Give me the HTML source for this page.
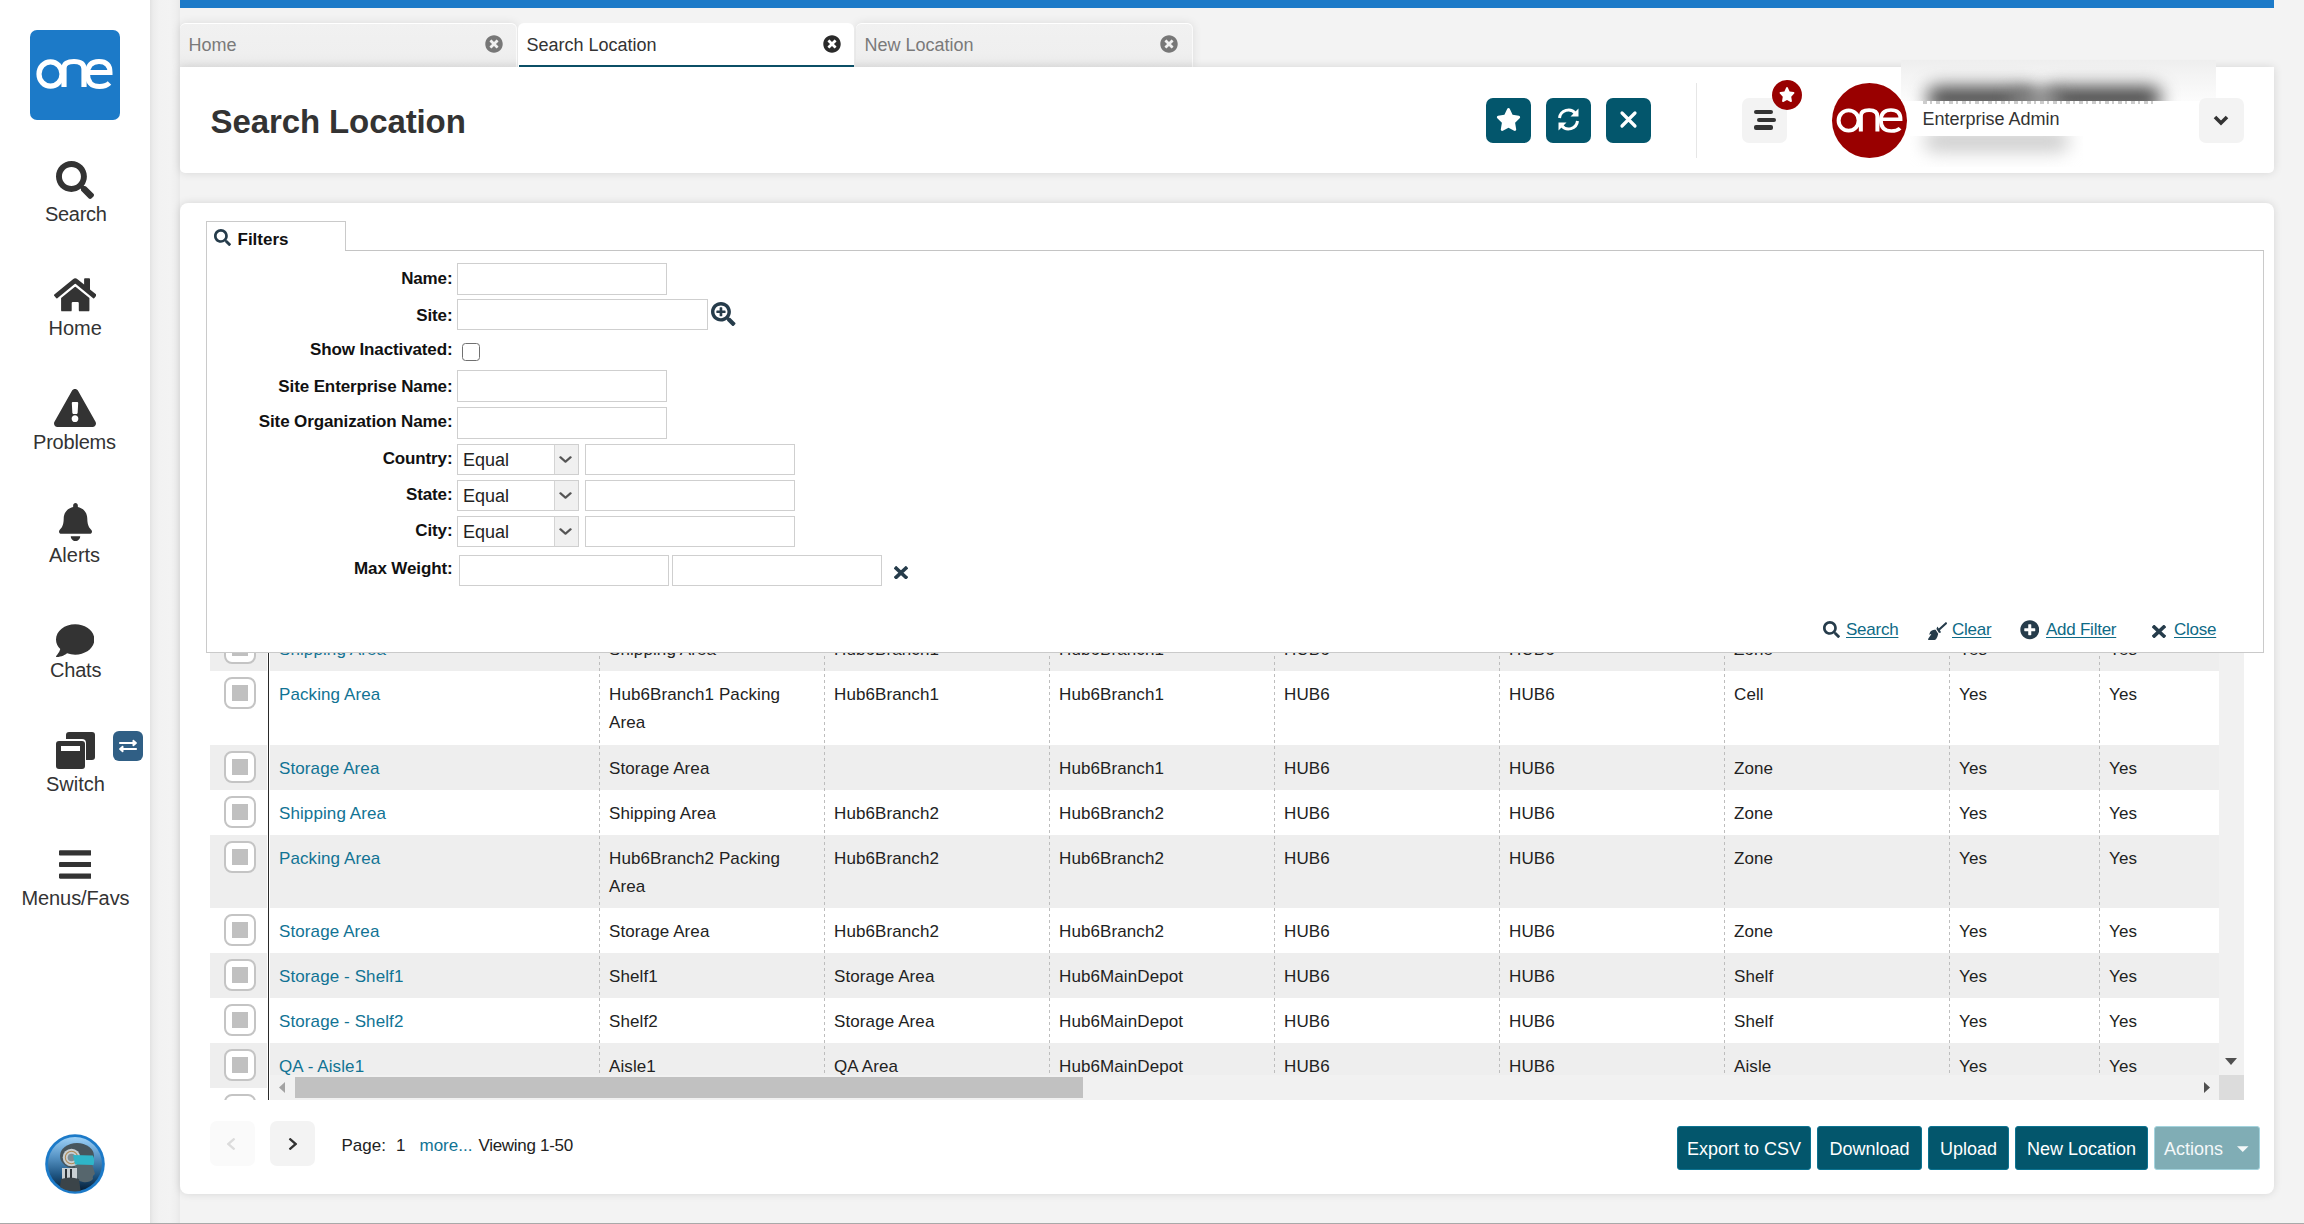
<!DOCTYPE html><html><head><meta charset="utf-8"><style>
*{box-sizing:border-box}
html,body{margin:0;padding:0}
body{width:2304px;height:1224px;overflow:hidden;background:#f3f3f3;position:relative;font-family:"Liberation Sans",sans-serif}
.b{position:absolute}
.t{position:absolute;white-space:nowrap;font-family:"Liberation Sans",sans-serif}
</style></head><body>
<div class="b" style="left:0px;top:0px;width:150px;height:1224px;background:#fff;"></div>
<div class="b" style="left:150px;top:0px;width:30px;height:1224px;background:linear-gradient(90deg,#e2e2e2 0px,#ececec 3px,#f2f2f2 9px,#f3f3f3 20px,#efefef 26px,#e9e9e9 30px);"></div>
<div class="b" style="left:30px;top:30px;width:90px;height:90px;background:#1c7ac8;border-radius:7px;"></div>
<svg class="b" style="left:36px;top:56px;width:78px;height:36px" viewBox="0 0 78 36"><ellipse cx="14.5" cy="18" rx="11.5" ry="12.2" fill="none" stroke="#fff" stroke-width="5.2"/><path d="M28 31 V12 Q28 5.5 38 5.5 Q48 5.5 48 13 V31" fill="none" stroke="#fff" stroke-width="5.2"/><path d="M51 16.5 H74 Q74 5.5 63 5.5 Q51.5 5.5 51.5 18 Q51.5 30.5 63.5 30.5 Q70 30.5 73.5 27" fill="none" stroke="#fff" stroke-width="5"/></svg>
<svg style="position:absolute;left:56px;top:161px;width:38px;height:38px;" viewBox="0 0 512 512" preserveAspectRatio="none"><path fill="#333" d="M505 442.7L405.3 343c-4.5-4.5-10.6-7-17-7H372c27.6-35.3 44-79.7 44-128C416 93.1 322.9 0 208 0S0 93.1 0 208s93.1 208 208 208c48.3 0 92.7-16.4 128-44v16.3c0 6.4 2.5 12.5 7 17l99.7 99.7c9.4 9.4 24.6 9.4 33.9 0l28.3-28.3c9.4-9.4 9.4-24.6.1-34zM208 336c-70.7 0-128-57.2-128-128 0-70.7 57.2-128 128-128 70.7 0 128 57.2 128 128 0 70.7-57.2 128-128 128z"/></svg>
<div class="t " style="left:45px;top:204.07px;font-size:20px;line-height:20px;color:#333;font-weight:400;width:61px;letter-spacing:-0.3px">Search</div>
<svg style="position:absolute;left:53.5px;top:275.6px;width:42.5px;height:37.7px;" viewBox="0 0 576 512" preserveAspectRatio="none"><path fill="#333" d="M280.37 148.26L96 300.11V464a16 16 0 0 0 16 16l112.06-.29a16 16 0 0 0 15.92-16V368a16 16 0 0 1 16-16h64a16 16 0 0 1 16 16v95.64a16 16 0 0 0 16 16.05L464 480a16 16 0 0 0 16-16V300L295.67 148.26a12.19 12.19 0 0 0-15.3 0zM571.6 251.47L488 182.56V44.05a12 12 0 0 0-12-12h-56a12 12 0 0 0-12 12v72.61L318.47 43a48 48 0 0 0-61 0L4.34 251.47a12 12 0 0 0-1.6 16.9l25.5 31A12 12 0 0 0 45.15 301l235.220-193.74a12.19 12.19 0 0 1 15.3 0L530.9 301a12 12 0 0 0 16.9-1.6l25.5-31a12 12 0 0 0-1.7-16.93z"/></svg>
<div class="t " style="left:48.5px;top:317.57px;font-size:20px;line-height:20px;color:#333;font-weight:400;">Home</div>
<svg style="position:absolute;left:54px;top:389px;width:42px;height:38px;" viewBox="0 0 576 512" preserveAspectRatio="none"><path fill="#333" d="M569.517 440.013C587.975 472.007 564.806 512 527.94 512H48.054c-36.937 0-59.999-40.055-41.577-71.987L246.423 23.985c18.467-32.009 64.72-31.951 83.154 0l239.94 416.028zM288 354c-25.405 0-46 20.595-46 46s20.595 46 46 46 46-20.595 46-46-20.595-46-46-46zm-43.673-165.346l7.418 136c.347 6.364 5.609 11.346 11.982 11.346h48.546c6.373 0 11.635-4.982 11.982-11.346l7.418-136c.375-6.874-5.098-12.654-11.982-12.654h-63.383c-6.884 0-12.356 5.78-11.981 12.654z"/></svg>
<div class="t " style="left:33px;top:431.57px;font-size:20px;line-height:20px;color:#333;font-weight:400;letter-spacing:-0.2px">Problems</div>
<svg style="position:absolute;left:58.5px;top:503px;width:33px;height:38px;" viewBox="0 0 448 512" preserveAspectRatio="none"><path fill="#333" d="M224 512c35.32 0 63.970-28.65 63.970-64H160.03c0 35.35 28.65 64 63.97 64zm215.39-149.71c-19.32-20.760-55.47-51.99-55.47-154.29 0-77.7-54.48-139.9-127.94-155.16V32c0-17.67-14.32-32-31.98-32s-31.98 14.33-31.98 32v20.84C118.56 68.1 64.08 130.3 64.08 208c0 102.3-36.15 133.53-55.47 154.29-6 6.45-8.66 14.16-8.61 21.71.11 16.4 12.98 32 32.1 32h383.8c19.12 0 32-15.6 32.1-32 .05-7.55-2.61-15.27-8.61-21.71z"/></svg>
<div class="t " style="left:49px;top:545.07px;font-size:20px;line-height:20px;color:#333;font-weight:400;">Alerts</div>
<svg style="position:absolute;left:56px;top:621.6px;width:38.4px;height:37.4px;" viewBox="0 0 512 512" preserveAspectRatio="none"><path fill="#333" d="M256 32C114.6 32 0 125.1 0 240c0 49.6 21.4 95 57 130.7C44.5 421.1 2.7 466 2.2 466.5c-2.2 2.3-2.8 5.7-1.5 8.7S4.8 480 8 480c66.3 0 116-31.8 140.6-51.4 32.7 12.3 69 19.4 107.4 19.4 141.4 0 256-93.1 256-208S397.4 32 256 32z"/></svg>
<div class="t " style="left:50px;top:659.57px;font-size:20px;line-height:20px;color:#333;font-weight:400;letter-spacing:-0.2px">Chats</div>
<div class="b" style="left:65.5px;top:731.5px;width:29px;height:28px;background:#333;border-radius:3px;"></div>
<div class="b" style="left:54px;top:739px;width:32px;height:31.5px;background:#fff;border-radius:4px;"></div>
<div class="b" style="left:56px;top:741px;width:28.5px;height:28px;background:#333;border-radius:3px;"></div>
<div class="b" style="left:60.5px;top:745.5px;width:19px;height:5px;background:#fff;"></div>
<div class="b" style="left:113px;top:731px;width:30px;height:30px;background:#305f85;border-radius:6px;"></div>
<svg style="position:absolute;left:119px;top:738px;width:18px;height:16px;" viewBox="0 0 512 512" preserveAspectRatio="none"><path fill="#fff" d="M0 168v-16c0-13.255 10.745-24 24-24h360V80c0-21.367 25.899-32.042 40.971-16.971l80 80c9.372 9.373 9.372 24.569 0 33.941l-80 80C409.956 271.982 384 261.456 384 240v-48H24c-13.255 0-24-10.745-24-24zm488 152H128v-48c0-21.314-25.862-32.08-40.971-16.971l-80 80c-9.372 9.373-9.372 24.569 0 33.941l80 80C102.057 463.997 128 453.437 128 432v-48h360c13.255 0 24-10.745 24-24v-16c0-13.255-10.745-24-24-24z"/></svg>
<div class="t " style="left:46px;top:774.07px;font-size:20px;line-height:20px;color:#333;font-weight:400;">Switch</div>
<svg style="position:absolute;left:58.5px;top:846px;width:32.5px;height:37px;" viewBox="0 0 448 512" preserveAspectRatio="none"><path fill="#333" d="M16 132h416c8.837 0 16-7.163 16-16V76c0-8.837-7.163-16-16-16H16C7.163 60 0 67.163 0 76v40c0 8.837 7.163 16 16 16zm0 160h416c8.837 0 16-7.163 16-16v-40c0-8.837-7.163-16-16-16H16c-8.837 0-16 7.163-16 16v40c0 8.837 7.163 16 16 16zm0 160h416c8.837 0 16-7.163 16-16v-40c0-8.837-7.163-16-16-16H16c-8.837 0-16 7.163-16 16v40c0 8.837 7.163 16 16 16z"/></svg>
<div class="t " style="left:21.5px;top:888.07px;font-size:20px;line-height:20px;color:#333;font-weight:400;letter-spacing:-0.1px">Menus/Favs</div>
<svg class="b" style="left:45px;top:1134px;width:60px;height:60px" viewBox="0 0 60 60"><defs><linearGradient id="avg" x1="0" y1="0" x2="0" y2="1"><stop offset="0" stop-color="#9fd2f7"/><stop offset="0.35" stop-color="#5a97c8"/><stop offset="0.7" stop-color="#1f5683"/><stop offset="1" stop-color="#071d33"/></linearGradient><clipPath id="avc"><circle cx="30" cy="30" r="27.5"/></clipPath></defs><circle cx="30" cy="30" r="29.8" fill="#1c7ac8"/><circle cx="30" cy="30" r="27" fill="url(#avg)"/><g clip-path="url(#avc)"><ellipse cx="32" cy="22" rx="17" ry="13" fill="#47555c"/><path d="M30 30 Q33 28 47 30 Q49 36 50 40 Q47 42 48 45 Q44 49 38 48 Q32 47 30 40 Z" fill="#56666d"/><rect x="17" y="34" width="15" height="12" fill="#c9d0d4"/><rect x="20" y="35" width="2" height="11" fill="#2c3338"/><rect x="25" y="35" width="2" height="11" fill="#2c3338"/><path d="M14 60 L16 45 Q25 42 34 45 L36 60 Z" fill="#3b4449"/><circle cx="26.5" cy="23.5" r="8.8" fill="#c6ced2"/><circle cx="26.5" cy="23.5" r="6.2" fill="none" stroke="#b08a55" stroke-width="1.1"/><circle cx="26.5" cy="23.5" r="3.8" fill="#7d8d93"/><path d="M28 21 L48 21.5 Q50 26 48.5 31 L30 30.5 Z" fill="#2fb5c8"/></g></svg>
<div class="b" style="left:0px;top:1223px;width:2304px;height:1px;background:#a9a9a9;"></div>
<div class="b" style="left:180px;top:0px;width:2094px;height:8px;background:#1c7ac8;"></div>
<div class="b" style="left:180px;top:23px;width:337px;height:44px;background:linear-gradient(180deg,#f1f1f1 0%,#efefef 70%,#e9e9e9 100%);border-radius:6px 6px 0 0;border-top:1px solid #fff;border-right:1px solid #fafafa;box-shadow:0 0 10px rgba(0,0,0,0.10);"></div><div class="t " style="left:188.5px;top:35.56px;font-size:18px;line-height:18px;color:#7a7a7a;font-weight:400;">Home</div><svg style="position:absolute;left:485px;top:35px;width:18px;height:18px;" viewBox="0 0 512 512" preserveAspectRatio="none"><path fill="#777" d="M256 8C119 8 8 119 8 256s111 248 248 248 248-111 248-248S393 8 256 8zm121.6 313.1c4.7 4.7 4.7 12.3 0 17L338 377.6c-4.7 4.7-12.3 4.7-17 0L256 312l-65.1 65.6c-4.7 4.7-12.3 4.7-17 0L134.4 338c-4.7-4.7-4.7-12.3 0-17l65.6-65-65.6-65.1c-4.7-4.7-4.7-12.3 0-17l39.6-39.6c4.7-4.7 12.3-4.7 17 0l65 65.7 65.1-65.6c4.7-4.7 12.3-4.7 17 0l39.6 39.6c4.7 4.7 4.7 12.3 0 17L312 256l65.6 65.1z"/></svg>
<div class="b" style="left:856px;top:23px;width:337px;height:44px;background:linear-gradient(180deg,#f1f1f1 0%,#efefef 70%,#e9e9e9 100%);border-radius:6px 6px 0 0;border-top:1px solid #fff;border-right:1px solid #fafafa;box-shadow:0 0 10px rgba(0,0,0,0.10);"></div><div class="t " style="left:864.5px;top:35.56px;font-size:18px;line-height:18px;color:#7a7a7a;font-weight:400;">New Location</div><svg style="position:absolute;left:1159.5px;top:35px;width:18px;height:18px;" viewBox="0 0 512 512" preserveAspectRatio="none"><path fill="#777" d="M256 8C119 8 8 119 8 256s111 248 248 248 248-111 248-248S393 8 256 8zm121.6 313.1c4.7 4.7 4.7 12.3 0 17L338 377.6c-4.7 4.7-12.3 4.7-17 0L256 312l-65.1 65.6c-4.7 4.7-12.3 4.7-17 0L134.4 338c-4.7-4.7-4.7-12.3 0-17l65.6-65-65.6-65.1c-4.7-4.7-4.7-12.3 0-17l39.6-39.6c4.7-4.7 12.3-4.7 17 0l65 65.7 65.1-65.6c4.7-4.7 12.3-4.7 17 0l39.6 39.6c4.7 4.7 4.7 12.3 0 17L312 256l65.6 65.1z"/></svg>
<div class="b" style="left:180px;top:67px;width:2094px;height:106px;background:#fff;border-radius:0 0 5px 5px;box-shadow:0 0 10px rgba(0,0,0,0.12);"></div>
<div class="b" style="left:518px;top:23px;width:336px;height:44px;background:#fff;border-radius:6px 6px 0 0;"></div><div class="b" style="left:519px;top:65px;width:335px;height:2px;background:#0b4f66;"></div><div class="t " style="left:526.5px;top:35.56px;font-size:18px;line-height:18px;color:#333;font-weight:400;">Search Location</div><svg style="position:absolute;left:823px;top:35px;width:18px;height:18px;" viewBox="0 0 512 512" preserveAspectRatio="none"><path fill="#2a2a2a" d="M256 8C119 8 8 119 8 256s111 248 248 248 248-111 248-248S393 8 256 8zm121.6 313.1c4.7 4.7 4.7 12.3 0 17L338 377.6c-4.7 4.7-12.3 4.7-17 0L256 312l-65.1 65.6c-4.7 4.7-12.3 4.7-17 0L134.4 338c-4.7-4.7-4.7-12.3 0-17l65.6-65-65.6-65.1c-4.7-4.7-4.7-12.3 0-17l39.6-39.6c4.7-4.7 12.3-4.7 17 0l65 65.7 65.1-65.6c4.7-4.7 12.3-4.7 17 0l39.6 39.6c4.7 4.7 4.7 12.3 0 17L312 256l65.6 65.1z"/></svg>
<div class="t " style="left:210.5px;top:105.07px;font-size:33px;line-height:33px;color:#333;font-weight:700;letter-spacing:-0.1px">Search Location</div>
<div class="b" style="left:1486px;top:98px;width:45px;height:45px;background:#03566c;border-radius:7px;"></div>
<div class="b" style="left:1546px;top:98px;width:45px;height:45px;background:#03566c;border-radius:7px;"></div>
<div class="b" style="left:1606px;top:98px;width:45px;height:45px;background:#03566c;border-radius:7px;"></div>
<svg style="position:absolute;left:1496px;top:108px;width:25px;height:23px;" viewBox="0 0 576 512" preserveAspectRatio="none"><path fill="#fff" d="M259.3 17.8L194 150.2 47.9 171.5c-26.2 3.8-36.7 36.1-17.7 54.6l105.7 103-25 145.5c-4.5 26.3 23.2 46 46.4 33.7L288 439.6l130.7 68.7c23.2 12.2 50.9-7.4 46.4-33.7l-25-145.5 105.7-103c19-18.5 8.5-50.8-17.7-54.6L382 150.2 316.7 17.8c-11.7-23.600-45.6-23.9-57.4 0z"/></svg>
<svg class="b" style="left:1556px;top:107px;width:25px;height:25px" viewBox="0 0 25 25"><path d="M3.5 11 A9 9 0 0 1 19.5 6.5" fill="none" stroke="#fff" stroke-width="3"/><path d="M14.5 9.5 H22.5 V1.5 Z" fill="#fff"/><path d="M21.5 14 A9 9 0 0 1 5.5 18.5" fill="none" stroke="#fff" stroke-width="3"/><path d="M10.5 15.5 H2.5 V23.5 Z" fill="#fff"/></svg>
<svg class="b" style="left:1619px;top:110px;width:19px;height:19px" viewBox="0 0 19 19"><path d="M3 3 L16 16 M16 3 L3 16" stroke="#fff" stroke-width="3.2" stroke-linecap="round"/></svg>
<div class="b" style="left:1696px;top:83px;width:1px;height:75px;background:#e6e6e6;"></div>
<div class="b" style="left:1742px;top:98px;width:45px;height:45px;background:#f3f3f3;border-radius:7px;"></div>
<div class="b" style="left:1754px;top:109.5px;width:19px;height:4px;background:#333;border-radius:2px;"></div>
<div class="b" style="left:1757px;top:117.5px;width:19px;height:4.3px;background:#333;border-radius:2px;"></div>
<div class="b" style="left:1754px;top:125.3px;width:19px;height:4.3px;background:#333;border-radius:2px;"></div>
<div class="b" style="left:1772px;top:80px;width:30px;height:30px;background:#990000;border-radius:50%;"></div>
<svg style="position:absolute;left:1779px;top:87px;width:16px;height:15px;" viewBox="0 0 576 512" preserveAspectRatio="none"><path fill="#fff" d="M259.3 17.8L194 150.2 47.9 171.5c-26.2 3.8-36.7 36.1-17.7 54.6l105.7 103-25 145.5c-4.5 26.3 23.2 46 46.4 33.7L288 439.6l130.7 68.7c23.2 12.2 50.9-7.4 46.4-33.7l-25-145.5 105.7-103c19-18.5 8.5-50.8-17.7-54.6L382 150.2 316.7 17.8c-11.7-23.600-45.6-23.9-57.4 0z"/></svg>
<div class="b" style="left:1832px;top:83px;width:75px;height:75px;background:#990000;border-radius:50%;"></div>
<svg class="b" style="left:1835.5px;top:106px;width:68px;height:29px" viewBox="0 0 78 36" preserveAspectRatio="none"><ellipse cx="14.5" cy="18" rx="11.5" ry="12.6" fill="none" stroke="#fff" stroke-width="4.6"/><path d="M28.5 31.5 V12 Q28.5 5 38 5 Q47.5 5 47.5 13 V31.5" fill="none" stroke="#fff" stroke-width="4.6"/><path d="M51 16.5 H74 Q74 5 63 5 Q51.5 5 51.5 18 Q51.5 31 63.5 31 Q70 31 73.5 27.5" fill="none" stroke="#fff" stroke-width="4.4"/></svg>
<div class="b" style="left:1901px;top:60px;width:315px;height:41px;overflow:hidden;background:linear-gradient(180deg,#eeeeee 0%,#f2f2f2 25%,#f6f6f6 55%,#fcfcfc 100%)"><div class="b" style="left:26px;top:27px;width:112px;height:22px;border-radius:10px;background:#3e3e3e;filter:blur(9px)"></div><div class="b" style="left:142px;top:27px;width:118px;height:22px;border-radius:10px;background:#3a3a3a;filter:blur(9px)"></div><div class="b" style="left:110px;top:32px;width:50px;height:14px;background:#8a8a8a;filter:blur(8px)"></div></div>
<div class="b" style="left:1923px;top:101px;width:230px;height:2.5px;background:repeating-linear-gradient(90deg,#333 0 4px,#fff 4px 7px,#333 7px 9px,#fff 9px 13px);opacity:.25"></div>
<div class="t " style="left:1922.5px;top:109.76px;font-size:18px;line-height:18px;color:#333;font-weight:400;">Enterprise Admin</div>
<div class="b" style="left:1910px;top:136px;width:173px;height:31px;overflow:hidden;background:#fff"><div class="b" style="left:14px;top:-6px;width:145px;height:22px;border-radius:10px;background:#cdcdcd;filter:blur(9px)"></div></div>
<div class="b" style="left:2199px;top:98px;width:45px;height:45px;background:#f3f3f3;border-radius:7px;"></div>
<svg class="b" style="left:2212px;top:112px;width:18px;height:16px" viewBox="0 0 18 16"><path d="M3 5 L9 11 L15 5" fill="none" stroke="#333" stroke-width="3.6" stroke-linecap="butt" stroke-linejoin="miter"/></svg>
<div class="b" style="left:180px;top:203px;width:2094px;height:991px;background:#fff;border-radius:8px;box-shadow:0 0 9px rgba(0,0,0,0.12);"></div>
<div class="b" style="left:210px;top:560px;width:2034px;height:540px;overflow:hidden">
<div class="b" style="left:0;top:66px;width:57px;height:45px;background:#eeeeee"></div><div class="b" style="left:60px;top:66px;width:1949px;height:45px;background:#eeeeee"></div><div class="b" style="left:14px;top:72px;width:32px;height:32px;border:2px solid #c4c4c4;border-radius:8px;background:#fff"></div><div class="b" style="left:22px;top:80px;width:16px;height:16px;background:#c0c0c0"></div><div class="b" style="left:0;top:111px;width:57px;height:74px;background:#ffffff"></div><div class="b" style="left:60px;top:111px;width:1949px;height:74px;background:#ffffff"></div><div class="b" style="left:14px;top:117px;width:32px;height:32px;border:2px solid #c4c4c4;border-radius:8px;background:#fff"></div><div class="b" style="left:22px;top:125px;width:16px;height:16px;background:#c0c0c0"></div><div class="b" style="left:0;top:185px;width:57px;height:45px;background:#eeeeee"></div><div class="b" style="left:60px;top:185px;width:1949px;height:45px;background:#eeeeee"></div><div class="b" style="left:14px;top:191px;width:32px;height:32px;border:2px solid #c4c4c4;border-radius:8px;background:#fff"></div><div class="b" style="left:22px;top:199px;width:16px;height:16px;background:#c0c0c0"></div><div class="b" style="left:0;top:230px;width:57px;height:45px;background:#ffffff"></div><div class="b" style="left:60px;top:230px;width:1949px;height:45px;background:#ffffff"></div><div class="b" style="left:14px;top:236px;width:32px;height:32px;border:2px solid #c4c4c4;border-radius:8px;background:#fff"></div><div class="b" style="left:22px;top:244px;width:16px;height:16px;background:#c0c0c0"></div><div class="b" style="left:0;top:275px;width:57px;height:73px;background:#eeeeee"></div><div class="b" style="left:60px;top:275px;width:1949px;height:73px;background:#eeeeee"></div><div class="b" style="left:14px;top:281px;width:32px;height:32px;border:2px solid #c4c4c4;border-radius:8px;background:#fff"></div><div class="b" style="left:22px;top:289px;width:16px;height:16px;background:#c0c0c0"></div><div class="b" style="left:0;top:348px;width:57px;height:45px;background:#ffffff"></div><div class="b" style="left:60px;top:348px;width:1949px;height:45px;background:#ffffff"></div><div class="b" style="left:14px;top:354px;width:32px;height:32px;border:2px solid #c4c4c4;border-radius:8px;background:#fff"></div><div class="b" style="left:22px;top:362px;width:16px;height:16px;background:#c0c0c0"></div><div class="b" style="left:0;top:393px;width:57px;height:45px;background:#eeeeee"></div><div class="b" style="left:60px;top:393px;width:1949px;height:45px;background:#eeeeee"></div><div class="b" style="left:14px;top:399px;width:32px;height:32px;border:2px solid #c4c4c4;border-radius:8px;background:#fff"></div><div class="b" style="left:22px;top:407px;width:16px;height:16px;background:#c0c0c0"></div><div class="b" style="left:0;top:438px;width:57px;height:45px;background:#ffffff"></div><div class="b" style="left:60px;top:438px;width:1949px;height:45px;background:#ffffff"></div><div class="b" style="left:14px;top:444px;width:32px;height:32px;border:2px solid #c4c4c4;border-radius:8px;background:#fff"></div><div class="b" style="left:22px;top:452px;width:16px;height:16px;background:#c0c0c0"></div><div class="b" style="left:0;top:483px;width:57px;height:45px;background:#eeeeee"></div><div class="b" style="left:60px;top:483px;width:1949px;height:45px;background:#eeeeee"></div><div class="b" style="left:14px;top:489px;width:32px;height:32px;border:2px solid #c4c4c4;border-radius:8px;background:#fff"></div><div class="b" style="left:22px;top:497px;width:16px;height:16px;background:#c0c0c0"></div><div class="b" style="left:0;top:528px;width:57px;height:45px;background:#ffffff"></div><div class="b" style="left:60px;top:528px;width:1949px;height:45px;background:#ffffff"></div><div class="b" style="left:14px;top:534px;width:32px;height:32px;border:2px solid #c4c4c4;border-radius:8px;background:#fff"></div><div class="b" style="left:22px;top:542px;width:16px;height:16px;background:#c0c0c0"></div><div class="t " style="left:69px;top:80.61px;font-size:17px;line-height:17px;color:#117394;font-weight:400;letter-spacing:0.1px">Shipping Area</div><div class="t " style="left:399px;top:80.61px;font-size:17px;line-height:17px;color:#222;font-weight:400;letter-spacing:0.1px">Shipping Area</div><div class="t " style="left:624px;top:80.61px;font-size:17px;line-height:17px;color:#222;font-weight:400;letter-spacing:0.1px">Hub6Branch1</div><div class="t " style="left:849px;top:80.61px;font-size:17px;line-height:17px;color:#222;font-weight:400;letter-spacing:0.1px">Hub6Branch1</div><div class="t " style="left:1074px;top:80.61px;font-size:17px;line-height:17px;color:#222;font-weight:400;letter-spacing:0.1px">HUB6</div><div class="t " style="left:1299px;top:80.61px;font-size:17px;line-height:17px;color:#222;font-weight:400;letter-spacing:0.1px">HUB6</div><div class="t " style="left:1524px;top:80.61px;font-size:17px;line-height:17px;color:#222;font-weight:400;letter-spacing:0.1px">Zone</div><div class="t " style="left:1749px;top:80.61px;font-size:17px;line-height:17px;color:#222;font-weight:400;letter-spacing:0.1px">Yes</div><div class="t " style="left:1899px;top:80.61px;font-size:17px;line-height:17px;color:#222;font-weight:400;letter-spacing:0.1px">Yes</div><div class="t " style="left:69px;top:125.61px;font-size:17px;line-height:17px;color:#117394;font-weight:400;letter-spacing:0.1px">Packing Area</div><div class="t " style="left:399px;top:125.61px;font-size:17px;line-height:17px;color:#222;font-weight:400;letter-spacing:0.1px">Hub6Branch1 Packing</div><div class="t " style="left:399px;top:154.21px;font-size:17px;line-height:17px;color:#222;font-weight:400;letter-spacing:0.1px">Area</div><div class="t " style="left:624px;top:125.61px;font-size:17px;line-height:17px;color:#222;font-weight:400;letter-spacing:0.1px">Hub6Branch1</div><div class="t " style="left:849px;top:125.61px;font-size:17px;line-height:17px;color:#222;font-weight:400;letter-spacing:0.1px">Hub6Branch1</div><div class="t " style="left:1074px;top:125.61px;font-size:17px;line-height:17px;color:#222;font-weight:400;letter-spacing:0.1px">HUB6</div><div class="t " style="left:1299px;top:125.61px;font-size:17px;line-height:17px;color:#222;font-weight:400;letter-spacing:0.1px">HUB6</div><div class="t " style="left:1524px;top:125.61px;font-size:17px;line-height:17px;color:#222;font-weight:400;letter-spacing:0.1px">Cell</div><div class="t " style="left:1749px;top:125.61px;font-size:17px;line-height:17px;color:#222;font-weight:400;letter-spacing:0.1px">Yes</div><div class="t " style="left:1899px;top:125.61px;font-size:17px;line-height:17px;color:#222;font-weight:400;letter-spacing:0.1px">Yes</div><div class="t " style="left:69px;top:199.61px;font-size:17px;line-height:17px;color:#117394;font-weight:400;letter-spacing:0.1px">Storage Area</div><div class="t " style="left:399px;top:199.61px;font-size:17px;line-height:17px;color:#222;font-weight:400;letter-spacing:0.1px">Storage Area</div><div class="t " style="left:849px;top:199.61px;font-size:17px;line-height:17px;color:#222;font-weight:400;letter-spacing:0.1px">Hub6Branch1</div><div class="t " style="left:1074px;top:199.61px;font-size:17px;line-height:17px;color:#222;font-weight:400;letter-spacing:0.1px">HUB6</div><div class="t " style="left:1299px;top:199.61px;font-size:17px;line-height:17px;color:#222;font-weight:400;letter-spacing:0.1px">HUB6</div><div class="t " style="left:1524px;top:199.61px;font-size:17px;line-height:17px;color:#222;font-weight:400;letter-spacing:0.1px">Zone</div><div class="t " style="left:1749px;top:199.61px;font-size:17px;line-height:17px;color:#222;font-weight:400;letter-spacing:0.1px">Yes</div><div class="t " style="left:1899px;top:199.61px;font-size:17px;line-height:17px;color:#222;font-weight:400;letter-spacing:0.1px">Yes</div><div class="t " style="left:69px;top:244.61px;font-size:17px;line-height:17px;color:#117394;font-weight:400;letter-spacing:0.1px">Shipping Area</div><div class="t " style="left:399px;top:244.61px;font-size:17px;line-height:17px;color:#222;font-weight:400;letter-spacing:0.1px">Shipping Area</div><div class="t " style="left:624px;top:244.61px;font-size:17px;line-height:17px;color:#222;font-weight:400;letter-spacing:0.1px">Hub6Branch2</div><div class="t " style="left:849px;top:244.61px;font-size:17px;line-height:17px;color:#222;font-weight:400;letter-spacing:0.1px">Hub6Branch2</div><div class="t " style="left:1074px;top:244.61px;font-size:17px;line-height:17px;color:#222;font-weight:400;letter-spacing:0.1px">HUB6</div><div class="t " style="left:1299px;top:244.61px;font-size:17px;line-height:17px;color:#222;font-weight:400;letter-spacing:0.1px">HUB6</div><div class="t " style="left:1524px;top:244.61px;font-size:17px;line-height:17px;color:#222;font-weight:400;letter-spacing:0.1px">Zone</div><div class="t " style="left:1749px;top:244.61px;font-size:17px;line-height:17px;color:#222;font-weight:400;letter-spacing:0.1px">Yes</div><div class="t " style="left:1899px;top:244.61px;font-size:17px;line-height:17px;color:#222;font-weight:400;letter-spacing:0.1px">Yes</div><div class="t " style="left:69px;top:289.61px;font-size:17px;line-height:17px;color:#117394;font-weight:400;letter-spacing:0.1px">Packing Area</div><div class="t " style="left:399px;top:289.61px;font-size:17px;line-height:17px;color:#222;font-weight:400;letter-spacing:0.1px">Hub6Branch2 Packing</div><div class="t " style="left:399px;top:318.21px;font-size:17px;line-height:17px;color:#222;font-weight:400;letter-spacing:0.1px">Area</div><div class="t " style="left:624px;top:289.61px;font-size:17px;line-height:17px;color:#222;font-weight:400;letter-spacing:0.1px">Hub6Branch2</div><div class="t " style="left:849px;top:289.61px;font-size:17px;line-height:17px;color:#222;font-weight:400;letter-spacing:0.1px">Hub6Branch2</div><div class="t " style="left:1074px;top:289.61px;font-size:17px;line-height:17px;color:#222;font-weight:400;letter-spacing:0.1px">HUB6</div><div class="t " style="left:1299px;top:289.61px;font-size:17px;line-height:17px;color:#222;font-weight:400;letter-spacing:0.1px">HUB6</div><div class="t " style="left:1524px;top:289.61px;font-size:17px;line-height:17px;color:#222;font-weight:400;letter-spacing:0.1px">Zone</div><div class="t " style="left:1749px;top:289.61px;font-size:17px;line-height:17px;color:#222;font-weight:400;letter-spacing:0.1px">Yes</div><div class="t " style="left:1899px;top:289.61px;font-size:17px;line-height:17px;color:#222;font-weight:400;letter-spacing:0.1px">Yes</div><div class="t " style="left:69px;top:362.61px;font-size:17px;line-height:17px;color:#117394;font-weight:400;letter-spacing:0.1px">Storage Area</div><div class="t " style="left:399px;top:362.61px;font-size:17px;line-height:17px;color:#222;font-weight:400;letter-spacing:0.1px">Storage Area</div><div class="t " style="left:624px;top:362.61px;font-size:17px;line-height:17px;color:#222;font-weight:400;letter-spacing:0.1px">Hub6Branch2</div><div class="t " style="left:849px;top:362.61px;font-size:17px;line-height:17px;color:#222;font-weight:400;letter-spacing:0.1px">Hub6Branch2</div><div class="t " style="left:1074px;top:362.61px;font-size:17px;line-height:17px;color:#222;font-weight:400;letter-spacing:0.1px">HUB6</div><div class="t " style="left:1299px;top:362.61px;font-size:17px;line-height:17px;color:#222;font-weight:400;letter-spacing:0.1px">HUB6</div><div class="t " style="left:1524px;top:362.61px;font-size:17px;line-height:17px;color:#222;font-weight:400;letter-spacing:0.1px">Zone</div><div class="t " style="left:1749px;top:362.61px;font-size:17px;line-height:17px;color:#222;font-weight:400;letter-spacing:0.1px">Yes</div><div class="t " style="left:1899px;top:362.61px;font-size:17px;line-height:17px;color:#222;font-weight:400;letter-spacing:0.1px">Yes</div><div class="t " style="left:69px;top:407.61px;font-size:17px;line-height:17px;color:#117394;font-weight:400;letter-spacing:0.1px">Storage - Shelf1</div><div class="t " style="left:399px;top:407.61px;font-size:17px;line-height:17px;color:#222;font-weight:400;letter-spacing:0.1px">Shelf1</div><div class="t " style="left:624px;top:407.61px;font-size:17px;line-height:17px;color:#222;font-weight:400;letter-spacing:0.1px">Storage Area</div><div class="t " style="left:849px;top:407.61px;font-size:17px;line-height:17px;color:#222;font-weight:400;letter-spacing:0.1px">Hub6MainDepot</div><div class="t " style="left:1074px;top:407.61px;font-size:17px;line-height:17px;color:#222;font-weight:400;letter-spacing:0.1px">HUB6</div><div class="t " style="left:1299px;top:407.61px;font-size:17px;line-height:17px;color:#222;font-weight:400;letter-spacing:0.1px">HUB6</div><div class="t " style="left:1524px;top:407.61px;font-size:17px;line-height:17px;color:#222;font-weight:400;letter-spacing:0.1px">Shelf</div><div class="t " style="left:1749px;top:407.61px;font-size:17px;line-height:17px;color:#222;font-weight:400;letter-spacing:0.1px">Yes</div><div class="t " style="left:1899px;top:407.61px;font-size:17px;line-height:17px;color:#222;font-weight:400;letter-spacing:0.1px">Yes</div><div class="t " style="left:69px;top:452.61px;font-size:17px;line-height:17px;color:#117394;font-weight:400;letter-spacing:0.1px">Storage - Shelf2</div><div class="t " style="left:399px;top:452.61px;font-size:17px;line-height:17px;color:#222;font-weight:400;letter-spacing:0.1px">Shelf2</div><div class="t " style="left:624px;top:452.61px;font-size:17px;line-height:17px;color:#222;font-weight:400;letter-spacing:0.1px">Storage Area</div><div class="t " style="left:849px;top:452.61px;font-size:17px;line-height:17px;color:#222;font-weight:400;letter-spacing:0.1px">Hub6MainDepot</div><div class="t " style="left:1074px;top:452.61px;font-size:17px;line-height:17px;color:#222;font-weight:400;letter-spacing:0.1px">HUB6</div><div class="t " style="left:1299px;top:452.61px;font-size:17px;line-height:17px;color:#222;font-weight:400;letter-spacing:0.1px">HUB6</div><div class="t " style="left:1524px;top:452.61px;font-size:17px;line-height:17px;color:#222;font-weight:400;letter-spacing:0.1px">Shelf</div><div class="t " style="left:1749px;top:452.61px;font-size:17px;line-height:17px;color:#222;font-weight:400;letter-spacing:0.1px">Yes</div><div class="t " style="left:1899px;top:452.61px;font-size:17px;line-height:17px;color:#222;font-weight:400;letter-spacing:0.1px">Yes</div><div class="t " style="left:69px;top:497.61px;font-size:17px;line-height:17px;color:#117394;font-weight:400;letter-spacing:0.1px">QA - Aisle1</div><div class="t " style="left:399px;top:497.61px;font-size:17px;line-height:17px;color:#222;font-weight:400;letter-spacing:0.1px">Aisle1</div><div class="t " style="left:624px;top:497.61px;font-size:17px;line-height:17px;color:#222;font-weight:400;letter-spacing:0.1px">QA Area</div><div class="t " style="left:849px;top:497.61px;font-size:17px;line-height:17px;color:#222;font-weight:400;letter-spacing:0.1px">Hub6MainDepot</div><div class="t " style="left:1074px;top:497.61px;font-size:17px;line-height:17px;color:#222;font-weight:400;letter-spacing:0.1px">HUB6</div><div class="t " style="left:1299px;top:497.61px;font-size:17px;line-height:17px;color:#222;font-weight:400;letter-spacing:0.1px">HUB6</div><div class="t " style="left:1524px;top:497.61px;font-size:17px;line-height:17px;color:#222;font-weight:400;letter-spacing:0.1px">Aisle</div><div class="t " style="left:1749px;top:497.61px;font-size:17px;line-height:17px;color:#222;font-weight:400;letter-spacing:0.1px">Yes</div><div class="t " style="left:1899px;top:497.61px;font-size:17px;line-height:17px;color:#222;font-weight:400;letter-spacing:0.1px">Yes</div><div class="b" style="left:389.0px;top:0;width:1px;height:540px;background:repeating-linear-gradient(180deg,#bdbdbd 0 3px,transparent 3px 6px)"></div><div class="b" style="left:614.0px;top:0;width:1px;height:540px;background:repeating-linear-gradient(180deg,#bdbdbd 0 3px,transparent 3px 6px)"></div><div class="b" style="left:839.0px;top:0;width:1px;height:540px;background:repeating-linear-gradient(180deg,#bdbdbd 0 3px,transparent 3px 6px)"></div><div class="b" style="left:1064.0px;top:0;width:1px;height:540px;background:repeating-linear-gradient(180deg,#bdbdbd 0 3px,transparent 3px 6px)"></div><div class="b" style="left:1289.0px;top:0;width:1px;height:540px;background:repeating-linear-gradient(180deg,#bdbdbd 0 3px,transparent 3px 6px)"></div><div class="b" style="left:1514.0px;top:0;width:1px;height:540px;background:repeating-linear-gradient(180deg,#bdbdbd 0 3px,transparent 3px 6px)"></div><div class="b" style="left:1739.0px;top:0;width:1px;height:540px;background:repeating-linear-gradient(180deg,#bdbdbd 0 3px,transparent 3px 6px)"></div><div class="b" style="left:1889.0px;top:0;width:1px;height:540px;background:repeating-linear-gradient(180deg,#bdbdbd 0 3px,transparent 3px 6px)"></div><div class="b" style="left:58px;top:0;width:1px;height:540px;background:#2a2a2a"></div><div class="b" style="left:2009px;top:0;width:25px;height:515px;background:#f1f1f1"></div><svg class="b" style="left:2015px;top:498px;width:12px;height:7px" viewBox="0 0 12 7"><path d="M0 0H12L6 7Z" fill="#505050"/></svg><div class="b" style="left:60px;top:515px;width:1949px;height:25px;background:#f1f1f1"></div><div class="b" style="left:85px;top:516.5px;width:788px;height:21.5px;background:#c1c1c1"></div><svg class="b" style="left:69px;top:521.5px;width:6px;height:11px" viewBox="0 0 6 11"><path d="M6 0V11L0 5.5Z" fill="#a3a3a3"/></svg><svg class="b" style="left:1994px;top:521.5px;width:6px;height:11px" viewBox="0 0 6 11"><path d="M0 0V11L6 5.5Z" fill="#505050"/></svg><div class="b" style="left:2009px;top:515px;width:25px;height:25px;background:#dcdcdc"></div>
</div>
<div class="b" style="left:206px;top:221px;width:140px;height:31px;background:#fff;border:1.5px solid #cacaca;border-bottom:none;"></div>
<div class="b" style="left:206px;top:250px;width:2058px;height:402.5px;background:#fff;border:1.5px solid #cacaca;border-top:none;"></div>
<div class="b" style="left:345px;top:250px;width:1919px;height:1px;background:#c4c4c4;"></div>
<div class="b" style="left:207.5px;top:250px;width:137.5px;height:2px;background:#fff;"></div>
<svg style="position:absolute;left:213.5px;top:228.5px;width:17px;height:17px;" viewBox="0 0 512 512" preserveAspectRatio="none"><path fill="#263c4b" d="M505 442.7L405.3 343c-4.5-4.5-10.6-7-17-7H372c27.6-35.3 44-79.7 44-128C416 93.1 322.9 0 208 0S0 93.1 0 208s93.1 208 208 208c48.3 0 92.7-16.4 128-44v16.3c0 6.4 2.5 12.5 7 17l99.7 99.7c9.4 9.4 24.6 9.4 33.9 0l28.3-28.3c9.4-9.4 9.4-24.6.1-34zM208 336c-70.7 0-128-57.2-128-128 0-70.7 57.2-128 128-128 70.7 0 128 57.2 128 128 0 70.7-57.2 128-128 128z"/></svg>
<div class="t " style="left:237.5px;top:230.61px;font-size:17px;line-height:17px;color:#111;font-weight:700;">Filters</div>
<div class="t" style="right:1851.5px;top:269.81px;font-size:17px;line-height:17px;color:#111;font-weight:700;text-align:right;letter-spacing:-0.12px">Name:</div>
<div class="t" style="right:1851.5px;top:306.61px;font-size:17px;line-height:17px;color:#111;font-weight:700;text-align:right;letter-spacing:-0.12px">Site:</div>
<div class="t" style="right:1851.5px;top:341.31px;font-size:17px;line-height:17px;color:#111;font-weight:700;text-align:right;letter-spacing:-0.12px">Show Inactivated:</div>
<div class="t" style="right:1851.5px;top:377.91px;font-size:17px;line-height:17px;color:#111;font-weight:700;text-align:right;letter-spacing:-0.12px">Site Enterprise Name:</div>
<div class="t" style="right:1851.5px;top:413.21px;font-size:17px;line-height:17px;color:#111;font-weight:700;text-align:right;letter-spacing:-0.12px">Site Organization Name:</div>
<div class="t" style="right:1851.5px;top:449.61px;font-size:17px;line-height:17px;color:#111;font-weight:700;text-align:right;letter-spacing:-0.12px">Country:</div>
<div class="t" style="right:1851.5px;top:485.91px;font-size:17px;line-height:17px;color:#111;font-weight:700;text-align:right;letter-spacing:-0.12px">State:</div>
<div class="t" style="right:1851.5px;top:522.01px;font-size:17px;line-height:17px;color:#111;font-weight:700;text-align:right;letter-spacing:-0.12px">City:</div>
<div class="t" style="right:1851.5px;top:560.21px;font-size:17px;line-height:17px;color:#111;font-weight:700;text-align:right;letter-spacing:-0.12px">Max Weight:</div>
<div class="b" style="left:457px;top:263px;width:210px;height:32px;background:#fff;border:1.5px solid #cfcfcf;"></div>
<div class="b" style="left:457px;top:299px;width:251px;height:31px;background:#fff;border:1.5px solid #cfcfcf;"></div>
<svg style="position:absolute;left:711px;top:302px;width:24.5px;height:24px;" viewBox="0 0 512 512" preserveAspectRatio="none"><path fill="#263c4b" d="M304 192v32c0 6.6-5.4 12-12 12h-56v56c0 6.6-5.4 12-12 12h-32c-6.6 0-12-5.4-12-12v-56h-56c-6.6 0-12-5.4-12-12v-32c0-6.6 5.4-12 12-12h56v-56c0-6.6 5.4-12 12-12h32c6.6 0 12 5.4 12 12v56h56c6.6 0 12 5.4 12 12zm201 284.7L476.7 505c-9.4 9.4-24.6 9.4-33.9 0L343 405.3c-4.5-4.5-7-10.6-7-17V372c-35.3 27.6-79.7 44-128 44C93.1 416 0 322.9 0 208S93.1 0 208 0s208 93.1 208 208c0 48.3-16.4 92.7-44 128h16.3c6.4 0 12.5 2.5 17 7l99.7 99.7c9.3 9.4 9.3 24.6 0 34zM344 208c0-75.2-60.8-136-136-136S72 132.8 72 208s60.8 136 136 136 136-60.8 136-136z"/></svg>
<div class="b" style="left:462px;top:343px;width:18px;height:18px;background:#fff;border:1.5px solid #707070;border-radius:3.5px;"></div>
<div class="b" style="left:457px;top:370px;width:210px;height:32px;background:#fff;border:1.5px solid #cfcfcf;"></div>
<div class="b" style="left:457px;top:407px;width:210px;height:32px;background:#fff;border:1.5px solid #cfcfcf;"></div>
<div class="b" style="left:457px;top:443.5px;width:122px;height:31px;background:#fff;border:1.5px solid #cfcfcf;"></div>
<div class="b" style="left:553.5px;top:443.5px;width:25px;height:31px;background:#f0f0f0;border:1.5px solid #cfcfcf;border-left:1.5px solid #d4d4d4;"></div>
<svg style="position:absolute;left:558.5px;top:453.0px;width:13px;height:13px;" viewBox="0 0 448 512" preserveAspectRatio="none"><path fill="#555" d="M207.029 381.476L12.686 187.132c-9.373-9.373-9.373-24.569 0-33.941l22.667-22.667c9.357-9.357 24.522-9.375 33.901-.04L224 284.505l154.745-154.021c9.379-9.335 24.544-9.317 33.901.04l22.667 22.667c9.373 9.373 9.373 24.569 0 33.941L240.971 381.476c-9.373 9.372-24.569 9.372-33.942 0z"/></svg>
<div class="t " style="left:463px;top:451.26px;font-size:18px;line-height:18px;color:#222;font-weight:400;">Equal</div>
<div class="b" style="left:585px;top:443.5px;width:210px;height:31px;background:#fff;border:1.5px solid #cfcfcf;"></div>
<div class="b" style="left:457px;top:479.5px;width:122px;height:31px;background:#fff;border:1.5px solid #cfcfcf;"></div>
<div class="b" style="left:553.5px;top:479.5px;width:25px;height:31px;background:#f0f0f0;border:1.5px solid #cfcfcf;border-left:1.5px solid #d4d4d4;"></div>
<svg style="position:absolute;left:558.5px;top:489.0px;width:13px;height:13px;" viewBox="0 0 448 512" preserveAspectRatio="none"><path fill="#555" d="M207.029 381.476L12.686 187.132c-9.373-9.373-9.373-24.569 0-33.941l22.667-22.667c9.357-9.357 24.522-9.375 33.901-.04L224 284.505l154.745-154.021c9.379-9.335 24.544-9.317 33.901.04l22.667 22.667c9.373 9.373 9.373 24.569 0 33.941L240.971 381.476c-9.373 9.372-24.569 9.372-33.942 0z"/></svg>
<div class="t " style="left:463px;top:487.26px;font-size:18px;line-height:18px;color:#222;font-weight:400;">Equal</div>
<div class="b" style="left:585px;top:479.5px;width:210px;height:31px;background:#fff;border:1.5px solid #cfcfcf;"></div>
<div class="b" style="left:457px;top:515.5px;width:122px;height:31px;background:#fff;border:1.5px solid #cfcfcf;"></div>
<div class="b" style="left:553.5px;top:515.5px;width:25px;height:31px;background:#f0f0f0;border:1.5px solid #cfcfcf;border-left:1.5px solid #d4d4d4;"></div>
<svg style="position:absolute;left:558.5px;top:525.0px;width:13px;height:13px;" viewBox="0 0 448 512" preserveAspectRatio="none"><path fill="#555" d="M207.029 381.476L12.686 187.132c-9.373-9.373-9.373-24.569 0-33.941l22.667-22.667c9.357-9.357 24.522-9.375 33.901-.04L224 284.505l154.745-154.021c9.379-9.335 24.544-9.317 33.901.04l22.667 22.667c9.373 9.373 9.373 24.569 0 33.941L240.971 381.476c-9.373 9.372-24.569 9.372-33.942 0z"/></svg>
<div class="t " style="left:463px;top:523.26px;font-size:18px;line-height:18px;color:#222;font-weight:400;">Equal</div>
<div class="b" style="left:585px;top:515.5px;width:210px;height:31px;background:#fff;border:1.5px solid #cfcfcf;"></div>
<div class="b" style="left:459px;top:554.5px;width:210px;height:31px;background:#fff;border:1.5px solid #cfcfcf;"></div>
<div class="b" style="left:672px;top:554.5px;width:210px;height:31px;background:#fff;border:1.5px solid #cfcfcf;"></div>
<svg class="b" style="left:893.5px;top:565.5px;width:14px;height:13.5px" viewBox="0 0 14 13"><path d="M2.2 2 L11.8 11 M11.8 2 L2.2 11" stroke="#263c4b" stroke-width="3.6" stroke-linecap="square"/></svg>
<svg style="position:absolute;left:1822.5px;top:621px;width:17px;height:17px;" viewBox="0 0 512 512" preserveAspectRatio="none"><path fill="#263c4b" d="M505 442.7L405.3 343c-4.5-4.5-10.6-7-17-7H372c27.6-35.3 44-79.7 44-128C416 93.1 322.9 0 208 0S0 93.1 0 208s93.1 208 208 208c48.3 0 92.7-16.4 128-44v16.3c0 6.4 2.5 12.5 7 17l99.7 99.7c9.4 9.4 24.6 9.4 33.9 0l28.3-28.3c9.4-9.4 9.4-24.6.1-34zM208 336c-70.7 0-128-57.2-128-128 0-70.7 57.2-128 128-128 70.7 0 128 57.2 128 128 0 70.7-57.2 128-128 128z"/></svg>
<div class="t " style="left:1846px;top:621.21px;font-size:17px;line-height:17px;color:#0e6a86;font-weight:400;text-decoration:underline;text-underline-offset:2px;letter-spacing:-0.25px">Search</div>
<svg style="position:absolute;left:1927.5px;top:621.5px;width:19px;height:18.5px;" viewBox="0 0 640 512" preserveAspectRatio="none"><path fill="#263c4b" d="M256.47 216.77l86.73 109.18s-16.6 102.36-76.57 150.12C206.66 523.85 0 510.19 0 510.19s3.8-23.14 11-55.43l94.62-112.17c3.97-4.7-.87-11.62-6.65-9.5l-60.4 22.09c14.44-41.66 32.72-80.04 54.6-97.47 59.97-47.76 163.3-40.94 163.3-40.94zM636.53 31.03l-19.86-25c-5.49-6.9-15.52-8.05-22.41-2.56l-232.48 177.8-34.14-42.97c-5.09-6.41-15.14-5.21-18.59 2.21l-25.33 54.55 86.73 109.18 58.8-12.45c8-1.69 11.42-11.2 6.34-17.6l-34.09-42.92 232.48-177.8c6.89-5.48 8.04-15.53 2.55-22.44z"/></svg>
<div class="t " style="left:1952px;top:621.21px;font-size:17px;line-height:17px;color:#0e6a86;font-weight:400;text-decoration:underline;text-underline-offset:2px;letter-spacing:-0.25px">Clear</div>
<svg style="position:absolute;left:2019.5px;top:620px;width:19.5px;height:19.5px;" viewBox="0 0 512 512" preserveAspectRatio="none"><path fill="#263c4b" d="M256 8C119 8 8 119 8 256s111 248 248 248 248-111 248-248S393 8 256 8zm144 276c0 6.6-5.4 12-12 12h-92v92c0 6.6-5.4 12-12 12h-56c-6.6 0-12-5.4-12-12v-92h-92c-6.6 0-12-5.4-12-12v-56c0-6.6 5.4-12 12-12h92v-92c0-6.6 5.4-12 12-12h56c6.6 0 12 5.4 12 12v92h92c6.6 0 12 5.4 12 12v56z"/></svg>
<div class="t " style="left:2046px;top:621.21px;font-size:17px;line-height:17px;color:#0e6a86;font-weight:400;text-decoration:underline;text-underline-offset:2px;letter-spacing:-0.25px">Add Filter</div>
<svg class="b" style="left:2152px;top:625px;width:14px;height:13px" viewBox="0 0 14 13"><path d="M2.2 2 L11.8 11 M11.8 2 L2.2 11" stroke="#263c4b" stroke-width="3.6" stroke-linecap="square"/></svg>
<div class="t " style="left:2174px;top:621.21px;font-size:17px;line-height:17px;color:#0e6a86;font-weight:400;text-decoration:underline;text-underline-offset:2px;letter-spacing:-0.25px">Close</div>
<div class="b" style="left:210px;top:1121px;width:45px;height:45px;background:#fafafa;border-radius:7px;"></div>
<svg style="position:absolute;left:226px;top:1137px;width:10px;height:14px;" viewBox="0 0 320 512" preserveAspectRatio="none"><path fill="#dcdcdc" d="M34.52 239.03L228.87 44.69c9.37-9.37 24.57-9.37 33.940 0l22.67 22.67c9.36 9.36 9.37 24.52.04 33.9L131.49 256l154.02 154.75c9.34 9.38 9.32 24.54-.04 33.9l-22.67 22.67c-9.37 9.37-24.57 9.37-33.94 0L34.52 272.97c-9.37-9.37-9.370-24.57 0-33.94z"/></svg>
<div class="b" style="left:270px;top:1121px;width:45px;height:45px;background:#f3f3f3;border-radius:7px;"></div>
<svg style="position:absolute;left:287.5px;top:1137px;width:10px;height:14px;" viewBox="0 0 320 512" preserveAspectRatio="none"><path fill="#333" d="M285.476 272.971L91.132 467.314c-9.373 9.373-24.569 9.373-33.941 0l-22.667-22.667c-9.357-9.357-9.375-24.522-.04-33.901L188.505 256 34.484 101.255c-9.335-9.379-9.317-24.544.04-33.901l22.667-22.667c9.373-9.373 24.569-9.373 33.941 0L285.475 239.03c9.373 9.372 9.373 24.568.001 33.941z"/></svg>
<div class="t " style="left:341.5px;top:1136.81px;font-size:17px;line-height:17px;color:#222;font-weight:400;">Page:</div>
<div class="t " style="left:396px;top:1136.81px;font-size:17px;line-height:17px;color:#222;font-weight:400;">1</div>
<div class="t " style="left:419.5px;top:1136.81px;font-size:17px;line-height:17px;color:#117394;font-weight:400;">more...</div>
<div class="t " style="left:478.5px;top:1136.81px;font-size:17px;line-height:17px;color:#222;font-weight:400;letter-spacing:-0.3px">Viewing 1-50</div>
<div class="b" style="left:1677px;top:1126px;width:134px;height:44px;background:#03566c;border:1px solid #0c7391;border-radius:3px;"></div>
<div class="t" style="left:1677px;top:1126px;width:134px;height:44px;line-height:46px;text-align:center;font-size:18px;color:#fff">Export to CSV</div>
<div class="b" style="left:1817px;top:1126px;width:105px;height:44px;background:#03566c;border:1px solid #0c7391;border-radius:3px;"></div>
<div class="t" style="left:1817px;top:1126px;width:105px;height:44px;line-height:46px;text-align:center;font-size:18px;color:#fff">Download</div>
<div class="b" style="left:1928px;top:1126px;width:81px;height:44px;background:#03566c;border:1px solid #0c7391;border-radius:3px;"></div>
<div class="t" style="left:1928px;top:1126px;width:81px;height:44px;line-height:46px;text-align:center;font-size:18px;color:#fff">Upload</div>
<div class="b" style="left:2015px;top:1126px;width:133px;height:44px;background:#03566c;border:1px solid #0c7391;border-radius:3px;"></div>
<div class="t" style="left:2015px;top:1126px;width:133px;height:44px;line-height:46px;text-align:center;font-size:18px;color:#fff">New Location</div>
<div class="b" style="left:2154px;top:1126px;width:106px;height:44px;background:#80adb5;border:1px solid #a3d3dd;border-radius:3px;"></div>
<div class="t " style="left:2164px;top:1139.76px;font-size:18px;line-height:18px;color:#f4f8f9;font-weight:400;">Actions</div>
<svg class="b" style="left:2237px;top:1145.5px;width:11.5px;height:6px" viewBox="0 0 12 6"><path d="M0 0H12L6 6Z" fill="#f4f8f9"/></svg>
</body></html>
